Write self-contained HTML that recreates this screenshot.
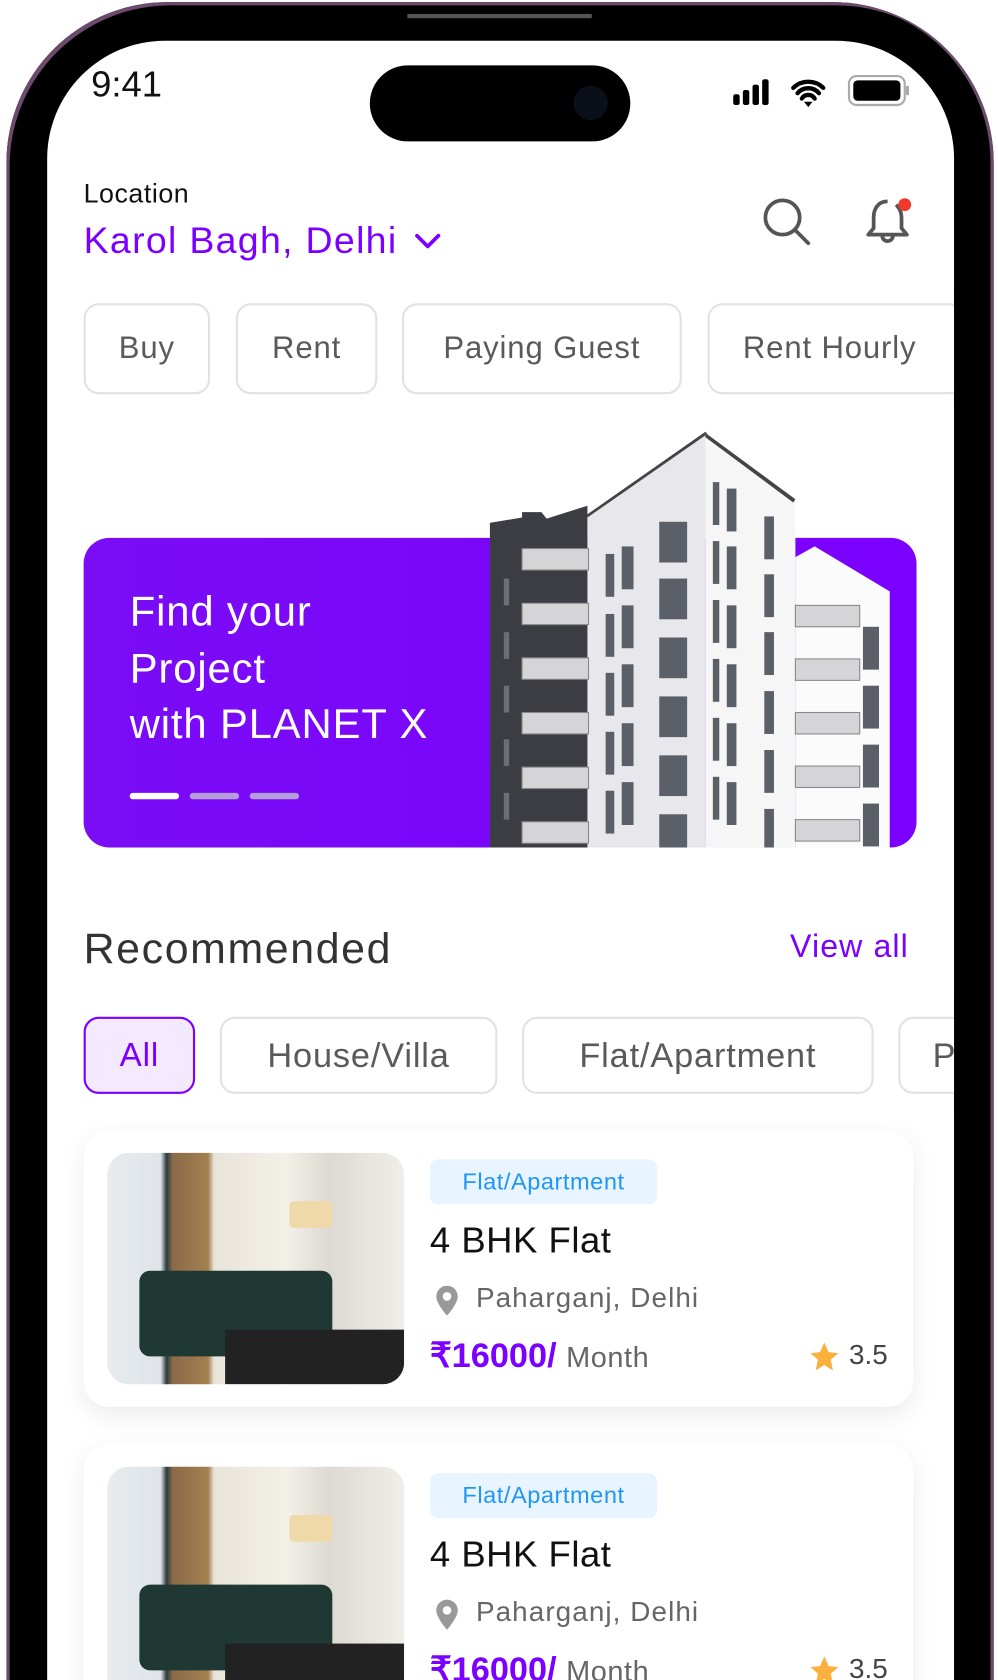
<!DOCTYPE html>
<html><head><meta charset="utf-8">
<style>
html,body{margin:0;padding:0;background:#fff;width:998px;height:1680px;overflow:hidden}
#clip{position:relative;width:998px;height:1680px;overflow:hidden}
#w{position:absolute;left:0;top:0;width:931px;height:1568px;overflow:hidden;transform:scale(1.07196,1.07143);transform-origin:0 0;font-family:"Liberation Sans",sans-serif}
.a{position:absolute}
.chip{position:absolute;border:2px solid #e2e2e2;border-radius:14px;box-sizing:border-box;color:#5a5a5a;font-size:29px;letter-spacing:0.8px;display:flex;align-items:center;justify-content:center;background:#fff}
.card{position:absolute;left:78px;width:774px;height:258px;background:#fff;border-radius:24px;box-shadow:0 8px 24px rgba(0,0,0,.08)}
.img{position:absolute;left:22px;top:21px;width:277px;height:216px;border-radius:20px;overflow:hidden;background:linear-gradient(90deg,#e8ecef 0,#dfe4e8 18%,#2a3a40 20%,#8a6a48 22%,#a4804f 34%,#e9e4da 36%,#f3f0e8 60%,#dcdad2 75%,#f0eee8 100%)}
.tag{position:absolute;left:323px;top:27px;width:212px;height:42px;background:#e8f4ff;border-radius:8px;color:#2196f3;font-size:22px;letter-spacing:0.5px;display:flex;align-items:center;justify-content:center}
.ttl{position:absolute;left:323px;top:84px;font-size:34px;color:#111;font-weight:500;letter-spacing:0.5px}
.loc{position:absolute;left:366px;top:141px;font-size:26px;color:#666;letter-spacing:1px}
.pr{position:absolute;left:323px;top:191px;font-size:32px;color:#7b00ff;font-weight:bold}
.pr span{font-weight:normal;color:#666;font-size:27px;letter-spacing:0.5px}
.rt{position:absolute;left:714px;top:194px;font-size:26px;color:#444}
</style></head><body><div id="clip"><div id="w">
<!-- phone body -->
<div class="a" style="left:6px;top:2px;width:921px;height:1566px;border-radius:150px 150px 0 0;background:#000;box-shadow:inset 3px 3px 0 0 #6b4a6b,inset -3px 0 0 0 #6b4a6b"></div>
<div class="a" style="left:44px;top:38px;width:846px;height:1530px;border-radius:110px 110px 0 0;background:#fff"></div>
<div class="a" style="left:380px;top:13px;width:172px;height:4px;background:#555"></div>
<!-- status -->
<div class="a" style="left:85px;top:60px;font-size:34px;color:#111">9:41</div>
<div class="a" style="left:345px;top:61px;width:243px;height:71px;border-radius:36px;background:#000"></div>
<div class="a" style="left:535px;top:80px;width:32px;height:32px;border-radius:50%;background:#0b0f1a"></div>
<svg class="a" style="left:680px;top:68px" width="170" height="36" viewBox="0 0 170 36">
<rect x="4" y="20" width="6" height="10" rx="2"/><rect x="13" y="16" width="6" height="14" rx="2"/><rect x="22" y="11" width="6" height="19" rx="2"/><rect x="31" y="6" width="6" height="24" rx="2"/>
<path d="M60 14a20 20 0 0 1 28 0M64 19a13 13 0 0 1 20 0M68 24a7 7 0 0 1 12 0" stroke="#000" stroke-width="4" fill="none" stroke-linecap="round"/><path d="M70 27l4 5 4-5z"/>
<rect x="112" y="3" width="52" height="27" rx="7" fill="none" stroke="#aaa" stroke-width="2"/><rect x="116" y="7" width="44" height="19" rx="4"/><rect x="165" y="12" width="3" height="9" rx="1.5" fill="#aaa"/>
</svg>
<!-- header -->
<div class="a" style="left:78px;top:167px;font-size:25px;color:#111;letter-spacing:0.5px">Location</div>
<div class="a" style="left:78px;top:205px;font-size:35px;color:#7b00ff;font-weight:500;letter-spacing:1.2px">Karol Bagh, Delhi</div>
<svg class="a" style="left:386px;top:215px" width="26" height="20"><path d="M3 5l10 10 10-10" stroke="#7b00ff" stroke-width="3.5" fill="none" stroke-linecap="round" stroke-linejoin="round"/></svg>
<svg class="a" style="left:708px;top:182px" width="52" height="52"><circle cx="22" cy="21" r="16" stroke="#555" stroke-width="3.5" fill="none"/><path d="M34 33l12 12" stroke="#555" stroke-width="3.5" stroke-linecap="round"/></svg>
<svg class="a" style="left:804px;top:180px" width="52" height="52"><path d="M24 8c-9 0-13 7-13 15v10l-5 6h36l-5-6V23c0-5-2-9-5-12" stroke="#555" stroke-width="3.5" fill="none" stroke-linejoin="round"/><path d="M19 40a5 5 0 0 0 10 0" stroke="#555" stroke-width="3.5" fill="none"/><circle cx="40" cy="11" r="6" fill="#f03a2e"/></svg>
<!-- chips -->
<div class="chip" style="left:78px;top:283px;width:118px;height:85px">Buy</div>
<div class="chip" style="left:220px;top:283px;width:132px;height:85px">Rent</div>
<div class="chip" style="left:375px;top:283px;width:261px;height:85px">Paying Guest</div>
<div class="chip" style="left:660px;top:283px;width:240px;height:85px;justify-content:flex-start;padding-left:31px">Rent Hourly</div>
<div class="a" style="left:890px;top:270px;width:34px;height:110px;background:#000"></div>
<!-- banner -->
<div class="a" style="left:78px;top:502px;width:777px;height:289px;border-radius:24px;background:linear-gradient(90deg,#7a0cf6,#7b00ff)"></div>
<div class="a" style="left:121px;top:546px;font-size:39px;line-height:52.5px;color:#fff;font-weight:500;letter-spacing:0.8px">Find your<br>Project<br>with PLANET X</div>
<div class="a" style="left:121px;top:740px;width:46px;height:6px;border-radius:3px;background:#fff"></div>
<div class="a" style="left:177px;top:740px;width:46px;height:6px;border-radius:3px;background:#b39ddb"></div>
<div class="a" style="left:233px;top:740px;width:46px;height:6px;border-radius:3px;background:#b39ddb"></div>
<svg class="a" style="left:0;top:0" width="931" height="800" viewBox="0 0 931 800">
<path d="M457 488l30-5v-5l18 0 5 6 38-12V791H457z" fill="#3b3d42"/>
<g fill="#6c6e73"><rect x="470" y="540" width="5" height="25"/><rect x="470" y="590" width="5" height="25"/><rect x="470" y="640" width="5" height="25"/><rect x="470" y="690" width="5" height="25"/><rect x="470" y="740" width="5" height="25"/></g>
<path d="M548 481l110-77 0 387H548z" fill="#e7e7ec"/>
<path d="M548 480l110-77 2 2-112 78z" fill="#444"/>
<path d="M658 404l84 62v325H658z" fill="#f6f6f6"/>
<path d="M658 404l84 62-2 3-82-61z" fill="#444"/>
<path d="M742 520l18-10 70 42v239H742z" fill="#fbfbfb"/>
<g fill="#d5d5d8" stroke="#888" stroke-width="1">
<rect x="487" y="512" width="62" height="20"/><rect x="487" y="563" width="62" height="20"/><rect x="487" y="614" width="62" height="20"/><rect x="487" y="665" width="62" height="20"/><rect x="487" y="716" width="62" height="20"/><rect x="487" y="767" width="62" height="20"/>
<rect x="742" y="565" width="60" height="20"/><rect x="742" y="615" width="60" height="20"/><rect x="742" y="665" width="60" height="20"/><rect x="742" y="715" width="60" height="20"/><rect x="742" y="765" width="60" height="20"/>
</g>
<g fill="#5b5f68">
<rect x="565" y="517" width="8" height="40"/><rect x="580" y="510" width="11" height="40"/><rect x="615" y="487" width="26" height="38"/>
<rect x="565" y="573" width="8" height="40"/><rect x="580" y="565" width="11" height="40"/><rect x="615" y="540" width="26" height="38"/>
<rect x="565" y="628" width="8" height="40"/><rect x="580" y="620" width="11" height="40"/><rect x="615" y="595" width="26" height="38"/>
<rect x="565" y="683" width="8" height="40"/><rect x="580" y="675" width="11" height="40"/><rect x="615" y="650" width="26" height="38"/>
<rect x="565" y="738" width="8" height="40"/><rect x="580" y="730" width="11" height="40"/><rect x="615" y="705" width="26" height="38"/>
<rect x="615" y="760" width="26" height="31"/>
<rect x="665" y="450" width="6" height="40"/><rect x="678" y="456" width="9" height="40"/><rect x="713" y="482" width="9" height="40"/>
<rect x="665" y="505" width="6" height="40"/><rect x="678" y="510" width="9" height="40"/><rect x="713" y="536" width="9" height="40"/>
<rect x="665" y="560" width="6" height="40"/><rect x="678" y="565" width="9" height="40"/><rect x="713" y="590" width="9" height="40"/>
<rect x="665" y="615" width="6" height="40"/><rect x="678" y="620" width="9" height="40"/><rect x="713" y="645" width="9" height="40"/>
<rect x="665" y="670" width="6" height="40"/><rect x="678" y="675" width="9" height="40"/><rect x="713" y="700" width="9" height="40"/>
<rect x="665" y="725" width="6" height="40"/><rect x="678" y="730" width="9" height="40"/><rect x="713" y="755" width="9" height="36"/>
<rect x="805" y="585" width="15" height="40"/><rect x="805" y="640" width="15" height="40"/><rect x="805" y="695" width="15" height="40"/><rect x="805" y="750" width="15" height="40"/>
</g>
</svg>
<!-- recommended -->
<div class="a" style="left:78px;top:864px;font-size:40px;color:#333;font-weight:500;letter-spacing:1.5px">Recommended</div>
<div class="a" style="left:737px;top:867px;font-size:30px;color:#7b00ff;font-weight:500;letter-spacing:1px">View all</div>
<div class="chip" style="left:78px;top:949px;width:104px;height:72px;border-color:#7b00ff;background:#f3eaff;color:#7b00ff;font-size:31px">All</div>
<div class="chip" style="left:205px;top:949px;width:259px;height:72px;font-size:32px">House/Villa</div>
<div class="chip" style="left:487px;top:949px;width:328px;height:72px;font-size:32px">Flat/Apartment</div>
<div class="chip" style="left:838px;top:949px;width:80px;height:72px;font-size:32px;justify-content:flex-start;padding-left:30px">P</div>
<div class="a" style="left:890px;top:930px;width:34px;height:110px;background:#000"></div>
<!-- cards -->
<div class="card" style="top:1055px">
<div class="img"><div class="a" style="left:30px;top:110px;width:180px;height:80px;background:#1f3833;border-radius:10px"></div><div class="a" style="left:110px;top:165px;width:167px;height:51px;background:#222"></div><div class="a" style="left:170px;top:45px;width:40px;height:25px;background:#f0d9a8;border-radius:4px"></div></div>
<div class="tag">Flat/Apartment</div><div class="ttl">4 BHK Flat</div>
<svg class="a" style="left:326px;top:143px" width="28" height="32"><path d="M13 2a10 10 0 0 1 10 10c0 7-10 18-10 18S3 19 3 12A10 10 0 0 1 13 2z" fill="#999"/><circle cx="13" cy="12" r="4" fill="#fff"/></svg>
<div class="loc">Paharganj, Delhi</div>
<div class="pr">₹16000/ <span>Month</span></div>
<svg class="a" style="left:676px;top:196px" width="30" height="30"><path d="M15 2l4 9 9 1-7 6 2 10-8-5-8 5 2-10-7-6 9-1z" fill="#fbb03b"/></svg>
<div class="rt">3.5</div>
</div>
<div class="card" style="top:1348px">
<div class="img"><div class="a" style="left:30px;top:110px;width:180px;height:80px;background:#1f3833;border-radius:10px"></div><div class="a" style="left:110px;top:165px;width:167px;height:51px;background:#222"></div><div class="a" style="left:170px;top:45px;width:40px;height:25px;background:#f0d9a8;border-radius:4px"></div></div>
<div class="tag">Flat/Apartment</div><div class="ttl">4 BHK Flat</div>
<svg class="a" style="left:326px;top:143px" width="28" height="32"><path d="M13 2a10 10 0 0 1 10 10c0 7-10 18-10 18S3 19 3 12A10 10 0 0 1 13 2z" fill="#999"/><circle cx="13" cy="12" r="4" fill="#fff"/></svg>
<div class="loc">Paharganj, Delhi</div>
<div class="pr">₹16000/ <span>Month</span></div>
<svg class="a" style="left:676px;top:196px" width="30" height="30"><path d="M15 2l4 9 9 1-7 6 2 10-8-5-8 5 2-10-7-6 9-1z" fill="#fbb03b"/></svg>
<div class="rt">3.5</div>
</div>
</div></div></body></html>
